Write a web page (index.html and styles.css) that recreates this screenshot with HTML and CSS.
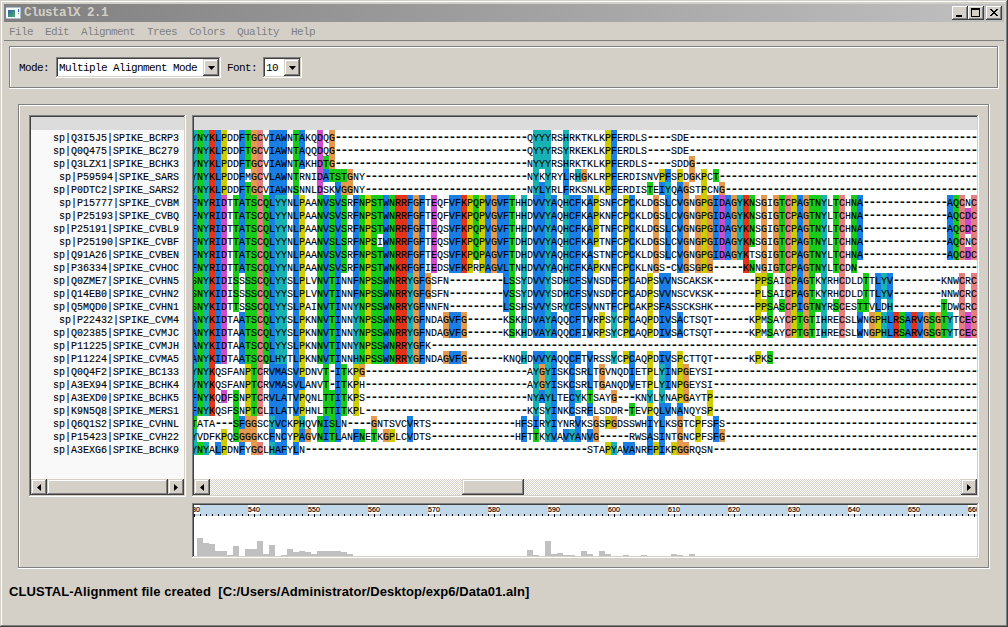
FILE: index.html
```html
<!DOCTYPE html>
<html lang="en">
<head>
<meta charset="utf-8">
<title>ClustalX 2.1</title>
<link rel="stylesheet" href="styles.css">
</head>
<body>
<div class="window">
  <header class="titlebar">
    <svg class="app-icon" width="16" height="14" viewBox="0 0 16 14">
      <defs><linearGradient id="ig" x1="0" y1="0" x2="1" y2="1"><stop offset="0" stop-color="#2f62a8"/><stop offset="1" stop-color="#4cb066"/></linearGradient></defs>
      <rect x="1" y="1" width="15" height="12" rx="1" fill="#aebccb"/>
      <rect x="1" y="2" width="14" height="10" fill="#f6f9fb"/>
      <rect x="3" y="4" width="7" height="7" fill="url(#ig)"/>
      <rect x="13" y="3" width="1" height="3" fill="#2c6fc0"/>
      <rect x="13" y="7" width="1" height="1" fill="#58b868"/>
    </svg>
    <h1 class="title">ClustalX 2.1</h1>
    <div class="win-buttons">
      <button class="win-btn raised" aria-label="Minimize"><svg width="16" height="14"><path d="M4 9h6v2H4z"/></svg></button>
      <button class="win-btn raised" aria-label="Maximize"><svg width="16" height="14"><path d="M3 2h9v9H3zM4 4v6h7V4z" fill-rule="evenodd"/></svg></button>
      <button class="win-btn close raised" aria-label="Close"><svg width="16" height="14" shape-rendering="crispEdges"><path d="M4 3h2v1h1v1h2V4h1V3h2v1h-1v1h-1v1H9v1h1v1h1v1h1v1h-2V9H9V8H7v1H6v1H4V9h1V8h1V7h1V6H6V5H5V4H4z"/></svg></button>
    </div>
  </header>
  <nav class="menubar">
    <span>File</span><span>Edit</span><span>Alignment</span><span>Trees</span><span>Colors</span><span>Quality</span><span>Help</span>
  </nav>
  <section class="toolbar etched">
    <label class="lbl">Mode:</label>
    <div class="combo combo-mode sunken"><span class="combo-text">Multiple Alignment Mode</span><span class="combo-btn raised"><svg width="7" height="4"><path d="M0 0h7L3.5 4z"/></svg></span></div>
    <label class="lbl lbl-font">Font:</label>
    <div class="combo combo-font sunken"><span class="combo-text">10</span><span class="combo-btn raised"><svg width="7" height="4"><path d="M0 0h7L3.5 4z"/></svg></span></div>
  </section>
  <main class="workspace etched">
    <section class="names sunken">
      <div class="strip"></div>
      <div class="name-list" id="names"></div>
      <div class="scrollbar">
        <span class="sb-btn raised"><svg width="4" height="7"><path d="M4 0v7L0 3.5z"/></svg></span>
        <span class="thumb grow raised"></span>
        <span class="sb-btn raised"><svg width="4" height="7"><path d="M0 0v7l4-3.5z"/></svg></span>
      </div>
    </section>
    <section class="alignment sunken">
      <div class="strip"></div>
      <div class="residues" id="residues"></div>
      <div class="scrollbar">
        <span class="sb-btn raised"><svg width="4" height="7"><path d="M4 0v7L0 3.5z"/></svg></span>
        <span class="track track-left"></span>
        <span class="thumb thumb-small raised"></span>
        <span class="track grow"></span>
        <span class="sb-btn raised"><svg width="4" height="7"><path d="M0 0v7l4-3.5z"/></svg></span>
      </div>
    </section>
    <section class="quality sunken">
      <div class="ruler" id="ruler"></div>
      <div class="histogram" id="histogram"></div>
    </section>
  </main>
  <footer class="status">CLUSTAL-Alignment file created  [C:/Users/Administrator/Desktop/exp6/Data01.aln]</footer>
</div>
<script src="app.js"></script>
</body>
</html>
```
FILE: styles.css
```css
* { box-sizing: border-box; }
body { margin: 0; background: #d4d0c8; }
svg { display: block; }

.window {
  width: 1008px;
  height: 627px;
  padding: 4px;
  background: #d4d0c8;
  box-shadow: inset -1px -1px #404040, inset 1px 1px #d4d0c8, inset -2px -2px #808080, inset 2px 2px #fff;
  font-family: "Liberation Mono", monospace;
  font-size: 11px;
  letter-spacing: -0.6px;
  color: #000;
  display: flex;
  flex-direction: column;
  overflow: hidden;
}

.raised {
  background: #d4d0c8;
  box-shadow: inset -1px -1px #404040, inset 1px 1px #d4d0c8, inset -2px -2px #808080, inset 2px 2px #fff;
}
.sunken {
  padding: 2px;
  box-shadow: inset -1px -1px #fff, inset 1px 1px #808080, inset -2px -2px #d4d0c8, inset 2px 2px #404040;
}
.etched {
  box-shadow: inset -1px -1px #fff, inset 1px 1px #808080, inset -2px -2px #808080, inset 2px 2px #fff;
}

.titlebar {
  height: 18px;
  flex: none;
  display: flex;
  align-items: center;
  padding: 0 2px 0 1px;
  background: linear-gradient(90deg, #808080, #c0c0c0);
}
.title {
  margin: 0 0 0 3px;
  font-size: 12.5px;
  font-weight: bold;
  line-height: 19px;
  letter-spacing: -0.5px;
  color: #d4d0c8;
}
.win-buttons { margin-left: auto; display: flex; }
.win-btn { width: 16px; height: 14px; padding: 0; border: 0; box-shadow: inset -1px -1px #404040, inset 1px 1px #fff, inset -2px -2px #808080; }
.close { margin-left: 2px; }

.menubar {
  height: 19px;
  flex: none;
  display: flex;
  gap: 12px;
  padding-left: 5px;
  border-bottom: 1px solid #808080;
  line-height: 20px;
  color: #808080;
}

.toolbar {
  flex: none;
  width: 990px;
  height: 43px;
  margin: 5px 0 0 5px;
  padding: 0 10px;
  display: flex;
  align-items: center;
}
.lbl { width: 30px; white-space: nowrap; }
.lbl-font { margin-left: 6px; }
.combo { height: 21px; display: flex; background: #fff; white-space: nowrap; margin-left: 7px; }
.combo-mode { width: 165px; }
.combo-font { width: 39px; margin-left: 6px; }
.combo-text { flex: 1; padding-left: 1px; line-height: 18px; }
.combo-btn { width: 16px; display: flex; align-items: center; justify-content: center; }

.workspace {
  flex: none;
  width: 972px;
  height: 465px;
  margin: 15px 0 0 14px;
  padding: 11px;
  display: grid;
  grid-template: 382px 55px / 157px 787px;
  gap: 6px;
}
.names, .alignment, .quality { display: flex; flex-direction: column; overflow: hidden; }
.quality { grid-column: 2; background: #fff; }
.strip { height: 13px; flex: none; background: #dcdcdc; }

.name-list { flex: 1; background: #f9f9f9; padding-right: 5px; text-align: right; }
.residues { flex: 1; background: #fff; overflow: hidden; }
.name, .row {
  height: 13px;
  font-size: 10px;
  line-height: 17px;
  letter-spacing: 0;
  white-space: pre;
  -webkit-text-stroke: 0.12px #000;
}
.row { display: flex; margin-left: -3px; }
.run { flex: none; height: 13px; }
.gap { font-size: 13px; letter-spacing: -1.801px; line-height: 15px; font-weight: bold; -webkit-text-stroke: 0; text-indent: -0.5px; }

.blue { background: #197fe5; }
.green { background: #19cc19; }
.red { background: #e53319; }
.cyan { background: #19b2b2; }
.pink { background: #e57f7f; }
.magenta { background: #cc4ccc; }
.orange { background: #e5994c; }
.yellow { background: #cccc00; }

.scrollbar { height: 16px; flex: none; display: flex; }
.sb-btn { width: 16px; flex: none; display: flex; align-items: center; justify-content: center; }
.grow { flex: 1; }
.track { background: repeating-conic-gradient(#fff 0 25%, #d4d0c8 0 50%) 0 0 / 2px 2px; }
.track-left { width: 252px; }
.thumb-small { width: 62px; }

.ruler { height: 11px; flex: none; display: flex; align-items: flex-end; background: #c0d8ea; overflow-x: clip; }
.tick { flex: none; width: 6px; height: 2px; border-left: 1px solid #000; }
.tick.major { height: 11px; border: 0; position: relative; }
.major::after { content: ""; position: absolute; left: 0; top: 9px; width: 1px; height: 3px; background: #000; }
.pos {
  position: absolute;
  left: -6px;
  top: 0;
  width: 12px;
  height: 9px;
  background: #fff;
  font: 7px/9px "Liberation Sans", sans-serif;
  letter-spacing: 0.1px;
  text-align: center;
  -webkit-text-stroke: 0.2px #000;
}
.histogram { flex: 1; display: flex; align-items: flex-end; margin-left: -3px; }
.bar { flex: none; width: 6px; background: #c0c0c0; }

.status {
  margin: 14px 0 0 5px;
  font: bold 13px/18px "Liberation Sans", Arial, sans-serif;
  letter-spacing: 0.07px;
  white-space: pre;
}
```
FILE: app.js
```js
// Upper case residues are coloured, lower case ones are not; a number is a run of gaps.
const SEQUENCES = [
  ["sp|Q3I5J5|SPIKE_BCRP3", "YNYKLPddFTGCvIAWnTAkqDqG32qYYYrsHrktklkPFerdls4sde"],
  ["sp|Q0Q475|SPIKE_BC279", "YNYKLPddFTGCvIAWnTAqqDqG32qYYYrsYrkeklkPFerdls4sde"],
  ["sp|Q3LZX1|SPIKE_BCHK3", "YNYKLPddFTGCvIAWnTAkhDTG32nYYYrsHrktklkPFerdls4sddG"],
  ["sp|P59594|SPIKE_SARS", "YNYKLPddFmGCvLAWnTrniDATSTGny27nYkYryLrHGklrPFerdisnvPFsPdGkPcT"],
  ["sp|P0DTC2|SPIKE_SARS2", "YNYKLPddFTGCvIAWnSnnlDskVGGny27nYLYrlFrksnlkPFerdisTeIYqAGstPcnG"],
  ["sp|P15777|SPIKE_CVBM", "FNYRIDtTATSCQLYYnLPaaNVSVSrFNPSTWNRRFGFtEqfVFKPQPVGVFThHdVVYAqHCFkAPsnFcPCkldGsLcVGnGPGIDAGYKNsGiGTCPAGTNYlTChNA14AQCnC"],
  ["sp|P25193|SPIKE_CVBQ", "FNYRIDtTATSCQLYYnLPaaNVSVSrFNPSTWNRRFGFtEqfVFKPQPVGVFThHdVVYAqHCFkAPknFcPCkldGsLcVGnGPGIDAGYKNsGiGTCPAGTNYlTChNA14AQCDC"],
  ["sp|P25191|SPIKE_CVBL9", "FNYRIDtTATSCQLYYnLPaaNVSVSrFNPSTWNRRFGFtEqsVFKPQPVGVFThHdVVYAqHCFkAPtnFcPCkldGsLcVGnGPGIDAGYKNsGiGTCPAGTNYlTChNA14AQCDC"],
  ["sp|P25190|SPIKE_CVBF", "FNYRIDtTATSCQLYYnLPaaNVSLSrFNPSiWNRRFGFtEqsVFKPQPVGVFTdHdVVYAqHCFkAPtnFcPCkldGsLcVGnGPGIDAGYKNsGiGTCPAGTNYlTChNA14AQCnC"],
  ["sp|Q91A26|SPIKE_CVBEN", "FNYRIDtTATSCQLYYnLPaaNVSVSrFNPSTWNRRFGFtEqsVFKPQPAGVFTdHdVVYAqHCFkAstnFcPCkldGsLcVGnGPGIDAGYKtsGiGTCPAGTNYlTChNA14AQCDC"],
  ["sp|P36334|SPIKE_CVHOC", "FNYRIDtTATSCQLYYnLPaaNVSVSrFNPSTWNKRFGFiEdsVFKPrPAGVLTnHdVVYAqHCFkAPknFcPCklnGs1cVGsGPG5KNnGiGTCPAGTNYlTCdN"],
  ["sp|Q0ZME7|SPIKE_CVHN5", "SNYKIDiSsSSCQLYYsLPlvNVTInnFNPSSWNRRYGFGsfn9LSsYdVVYsdHCFsVnsdFcPCadPsVVnscaksk7PPSaiCPAGTkYrhCdldTtLYV8knwCrC"],
  ["sp|Q14EB0|SPIKE_CVHN2", "SNYKIDiSsSSCQLYYsLPlvNVTInnFNPSSWNRRYGFGsfn9VSsYdVVYsdHCFsVnsdFcPCadPsVVnscvksk7PlSaiCPAGTkYrhCdldTtLYV8nnwCrC"],
  ["sp|Q5MQD0|SPIKE_CVHN1", "SNYKIDtTsSSCQLYYsLPaiNVTInnYNPSSWNRRYGFnnfn9LSsHsVVYsrYCFsVnntFcPCakPsFAssckshk7PPSaSCPIGTNYrSCesTTvLdH8TdwCrC"],
  ["sp|P22432|SPIKE_CVM4", "ANYKIDtaATSCQLYYsLPknNVTInnYNPSSWNRRYGFndaGVFG6kSkHdVAYAqqCFtVrPsYcPCaqPdIVsActsqt6kPmSayCPTGTiHreCslWnGPHLRSARVGSGTYtCEC"],
  ["sp|Q02385|SPIKE_CVMJC", "ANYKIDtaATSCQLYYsLPknNVTInnYNPSSWNRRYGFndaGVFG6kSkHdVAYAqqCFiVrPsYcPCaqPdIVsActsqt6kPmSayCPTGTiHreCslWnGPHLRSARVGSGTYtCEC"],
  ["sp|P11225|SPIKE_CVMJH", "ANYKIDtaATSCQLYYsLPknNVTInnYNPSSWNRRYGFk"],
  ["sp|P11224|SPIKE_CVMA5", "ANYKIDtaATSCQLHYtLPknNVTInnHNPSSWNRRYGFndaGVFG6knqHdVVYAqqCFtVrssYcPCaqPdIVsPcttqt6kPkS"],
  ["sp|Q0Q4F2|SPIKE_BC133", "YNYKqsfanPTCrVMAsVPdnvT1ITkPG27aYGYIskCsrLtGvnqdIetPlYInPGeysi"],
  ["sp|A3EX94|SPIKE_BCHK4", "YNYKqsfanPTCrVMAsVLanvT1ITkPh27aYGYIskCsrLtGanqdVetPlYInPGeysi"],
  ["sp|A3EXD0|SPIKE_BCHK5", "FNYKqDfSnPTCrVLAtVPqnlTTITkPs27nYAYLteCYkTsayG3knYlYnaPGaytP"],
  ["sp|K9N5Q8|SPIKE_MERS1", "FNYKqsfSnPTClILAtVPhnlTTITkPl27kYsYInkCsrFlsddr1TevPqLVnAnqysP"],
  ["sp|Q6Q1S2|SPIKE_CVHNL", "Tata3SFGGscYVCkPHqvNISLn4GntsvcVrts14hFsIrYIynrVksGsPGdsswhIyLksGtcPfsFs"],
  ["sp|P15423|SPIKE_CVH22", "YvdfkPqSGGGkcFnCyPAGvNITLanFNeTkGPlcVdts14hFtTkYVaVYAnVG5rwsAsIntGncPfsFG"],
  ["sp|A3EXG6|SPIKE_BCHK9", "YNYaLPdnFyGClHAFyLn47staPYaVAnrFPIkPGGrqsn"]
];
const COLUMNS = 131;
const CELL = 6;
const CONSERVED_CYS = new Set([11, 99, 108, 128, 130]);
const GROUPS = { blue: "AILMFWVC", green: "NQST", red: "KR", cyan: "HY", magenta: "DE", orange: "G", yellow: "P" };

function colour(ch, col) {
  if (ch === "-") return "gap";
  if (ch !== ch.toUpperCase()) return "plain";
  if (ch === "C" && CONSERVED_CYS.has(col)) return "pink";
  return Object.keys(GROUPS).find(k => GROUPS[k].includes(ch));
}

function add(parent, cls, text) {
  const el = document.createElement("div");
  el.className = cls;
  if (text) el.textContent = text;
  parent.appendChild(el);
  return el;
}

const names = document.getElementById("names");
const residues = document.getElementById("residues");
for (const [name, packed] of SEQUENCES) {
  add(names, "name", name);
  const seq = packed.replace(/\d+/g, n => "-".repeat(+n)).padEnd(COLUMNS, "-");
  const row = add(residues, "row");
  for (let i = 0; i < COLUMNS;) {
    const c = colour(seq[i], i);
    let j = i + 1;
    while (j < COLUMNS && colour(seq[j], j) === c) j++;
    const run = add(row, "run " + c, seq.slice(i, j).toUpperCase());
    run.style.width = (j - i) * CELL + "px";
    i = j;
  }
}

const ruler = document.getElementById("ruler");
for (let p = 530; p <= 660; p++) {
  const major = p % 10 === 0;
  const tick = add(ruler, major ? "tick major" : "tick");
  if (major) add(tick, "pos", String(p));
}

const QUALITY = [0, 18, 13, 12, 5, 5, 1, 10, 0, 7, 7, 15, 2, 11, 0, 1, 7, 4, 5, 4, 2, 5, 5, 5, 5, 4, 2]
  .concat(Array(29).fill(0), [6, 1, 0, 15, 2, 3, 1, 1, 0, 5, 2, 0, 5, 2, 0, 0, 1, 0, 0, 1, 0, 0, 0, 0, 2, 1, 0, 2]);
const histogram = document.getElementById("histogram");
for (const h of QUALITY) add(histogram, "bar").style.height = h + "px";
```
